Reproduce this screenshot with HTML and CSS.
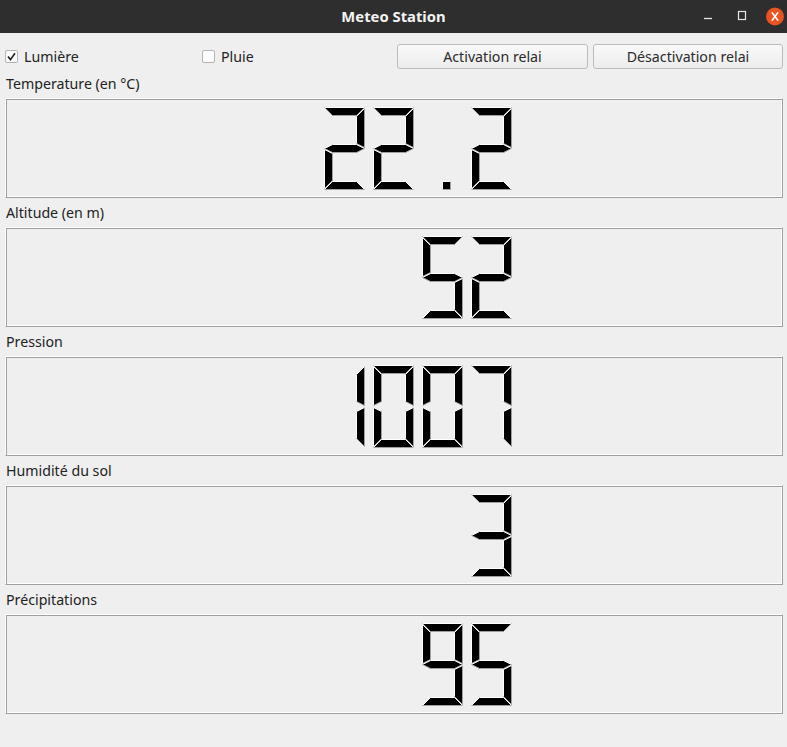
FILE: index.html
```html
<!DOCTYPE html>
<html lang="fr">
<head>
<meta charset="utf-8">
<title>Meteo Station</title>
<link rel="stylesheet" href="styles.css">
</head>
<body>
<div class="window">
  <header class="titlebar">
    <div class="tb-side"></div>
    <div class="tb-title">Meteo Station</div>
    <div class="tb-side tb-controls">
      <svg class="tb-icons" width="100" height="33" viewBox="0 0 100 33">
        <line x1="17" y1="17.5" x2="25" y2="17.5" stroke="#e6e6e6" stroke-width="1.3"/>
        <rect x="51.5" y="10.5" width="7" height="8" fill="none" stroke="#e6e6e6" stroke-width="1.2"/>
        <circle cx="88" cy="15.5" r="9" fill="#e95420"/>
        <path d="M85.2 11.8 L90.8 19.2 M90.8 11.8 L85.2 19.2" stroke="#ffffff" stroke-width="1.5" stroke-linecap="round"/>
      </svg>
    </div>
  </header>

  <main class="content">
    <div class="toprow">
      <label class="check">
        <span class="box">
          <svg width="13" height="13" viewBox="0 0 13 13"><path d="M3 6.6 L5.4 9.6 L10 3.2" fill="none" stroke="#1e1e1e" stroke-width="1.6"/></svg>
        </span>
        <span class="check-text">Lumière</span>
      </label>
      <label class="check">
        <span class="box"></span>
        <span class="check-text">Pluie</span>
      </label>
      <button class="btn">Activation relai</button>
      <button class="btn">Désactivation relai</button>
    </div>

    <section class="field">
      <div class="label">Temperature (en °C)</div>
      <div class="lcd">
        <svg class="lcd-svg" width="776" height="98" viewBox="0 0 776 98">
          <defs>
            <g id="s0"><polygon points="0,0 40,0 32,8 8,8"/><polyline class="lt" points="0,0 40,0"/><polyline class="dk" points="40,0 32,8 8,8 0,0"/></g>
            <g id="s1"><polygon points="0,1 8,9 8,36 0,40"/><polyline class="lt" points="0,1 8,9"/><polyline class="dk" points="8,9 8,36 0,40"/><polyline class="lt" points="0,40 0,1"/></g>
            <g id="s2"><polygon points="40,1 40,40 32,36 32,9"/><polyline class="dk" points="40,1 40,40 32,36"/><polyline class="lt" points="32,36 32,9 40,1"/></g>
            <g id="s3"><polygon points="0,41 8,37 32,37 40,41 32,45 8,45"/><polyline class="lt" points="0,41 8,37 32,37 40,41"/><polyline class="dk" points="40,41 32,45 8,45 0,41"/></g>
            <g id="s4"><polygon points="0,42 8,46 8,73 0,81"/><polyline class="lt" points="0,42 8,46"/><polyline class="dk" points="8,46 8,73 0,81"/><polyline class="lt" points="0,81 0,42"/></g>
            <g id="s5"><polygon points="40,42 40,81 32,73 32,46"/><polyline class="dk" points="40,42 40,81 32,73"/><polyline class="lt" points="32,73 32,46 40,42"/></g>
            <g id="s6"><polygon points="0,82 8,74 32,74 40,82"/><polyline class="lt" points="0,82 8,74 32,74 40,82"/><polyline class="dk" points="40,82 0,82"/></g>
            <g id="s7"><polygon points="20,82 28,82 28,74 20,74"/><polyline class="dk" points="20,82 28,82 28,74"/><polyline class="lt" points="28,74 20,74 20,82"/></g>

            <g id="d0"><use href="#s0"/><use href="#s1"/><use href="#s2"/><use href="#s4"/><use href="#s5"/><use href="#s6"/></g>
            <g id="d1"><use href="#s2"/><use href="#s5"/></g>
            <g id="d2"><use href="#s0"/><use href="#s2"/><use href="#s3"/><use href="#s4"/><use href="#s6"/></g>
            <g id="d3"><use href="#s0"/><use href="#s2"/><use href="#s3"/><use href="#s5"/><use href="#s6"/></g>
            <g id="d5"><use href="#s0"/><use href="#s1"/><use href="#s3"/><use href="#s5"/><use href="#s6"/></g>
            <g id="d7"><use href="#s0"/><use href="#s2"/><use href="#s5"/></g>
            <g id="d9"><use href="#s0"/><use href="#s1"/><use href="#s2"/><use href="#s3"/><use href="#s5"/><use href="#s6"/></g>
            <g id="dp"><use href="#s7"/></g>
          </defs>
          <g class="digits" transform="translate(269.5 8.5)">
            <use href="#d2" x="49"/>
            <use href="#d2" x="98"/>
            <use href="#dp" x="147"/>
            <use href="#d2" x="196"/>
          </g>
        </svg>
      </div>
    </section>

    <section class="field">
      <div class="label">Altitude (en m)</div>
      <div class="lcd">
        <svg class="lcd-svg" width="776" height="98" viewBox="0 0 776 98">
          <g class="digits" transform="translate(269.5 8.5)">
            <use href="#d5" x="147"/>
            <use href="#d2" x="196"/>
          </g>
        </svg>
      </div>
    </section>

    <section class="field">
      <div class="label">Pression</div>
      <div class="lcd">
        <svg class="lcd-svg" width="776" height="98" viewBox="0 0 776 98">
          <g class="digits" transform="translate(269.5 8.5)">
            <use href="#d1" x="49"/>
            <use href="#d0" x="98"/>
            <use href="#d0" x="147"/>
            <use href="#d7" x="196"/>
          </g>
        </svg>
      </div>
    </section>

    <section class="field">
      <div class="label">Humidité du sol</div>
      <div class="lcd">
        <svg class="lcd-svg" width="776" height="98" viewBox="0 0 776 98">
          <g class="digits" transform="translate(269.5 8.5)">
            <use href="#d3" x="196"/>
          </g>
        </svg>
      </div>
    </section>

    <section class="field">
      <div class="label">Précipitations</div>
      <div class="lcd">
        <svg class="lcd-svg" width="776" height="98" viewBox="0 0 776 98">
          <g class="digits" transform="translate(269.5 8.5)">
            <use href="#d9" x="147"/>
            <use href="#d5" x="196"/>
          </g>
        </svg>
      </div>
    </section>
  </main>
</div>
</body>
</html>
```

FILE: styles.css
```css
* {
  box-sizing: border-box;
}

html, body {
  margin: 0;
  padding: 0;
  background: #efefef;
}

body {
  font-family: "Noto Sans", "DejaVu Sans", sans-serif;
  font-size: 14.2px;
  color: #222222;
}

.window {
  width: 787px;
  height: 747px;
  background: #efefef;
  overflow: hidden;
}

.titlebar {
  height: 33px;
  background: #2e2e2e;
  display: grid;
  grid-template-columns: 1fr auto 1fr;
  align-items: center;
}

.tb-title {
  color: #f4f4f4;
  font-weight: 700;
  font-size: 14.8px;
  line-height: 33px;
  padding-bottom: 2px;
}

.tb-controls {
  display: flex;
  justify-content: flex-end;
  height: 33px;
}

.tb-icons {
  display: block;
}

.content {
  padding: 0 4px 0 5px;
  display: flex;
  flex-direction: column;
}

.toprow {
  margin-top: 11px;
  height: 25px;
  display: grid;
  grid-template-columns: 192px 190px 191px 190px;
  column-gap: 5px;
  align-items: center;
}

.check {
  display: flex;
  align-items: center;
  gap: 6px;
  height: 25px;
}

.box {
  width: 13px;
  height: 13px;
  border: 1px solid #b4b4b4;
  border-radius: 2px;
  background: #fcfcfc;
  display: flex;
  align-items: center;
  justify-content: center;
}

.box svg {
  display: block;
  flex: none;
}

.check-text {
  line-height: 25px;
}

.btn {
  height: 25px;
  margin: 0;
  padding: 0;
  font-family: inherit;
  font-size: 14.2px;
  color: #2a2a2a;
  border: 1px solid #bcbcbc;
  border-radius: 3px;
  background: linear-gradient(#f9f9f9, #ececec);
  line-height: 23px;
}

.field {
  display: flex;
  flex-direction: column;
}

.label {
  height: 29px;
  line-height: 29px;
  padding-left: 1px;
  padding-bottom: 2px;
}

.lcd {
  height: 100px;
  width: 778px;
  border: 1px solid;
  border-color: #ffffff #a0a0a0 #a0a0a0 #ffffff;
  box-shadow: inset 1px 1px 0 #a0a0a0, inset -1px -1px 0 #ffffff;
}

.lcd-svg {
  display: block;
}

.lcd-svg polygon {
  fill: #000000;
}

.lcd-svg .lt {
  fill: none;
  stroke: #ffffff;
  stroke-width: 1;
}

.lcd-svg .dk {
  fill: none;
  stroke: #a0a0a0;
  stroke-width: 1;
}
```
